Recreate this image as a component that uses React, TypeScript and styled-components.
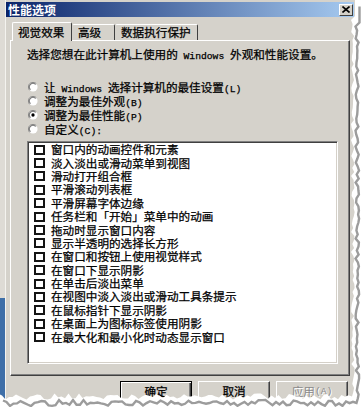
import React from "react";
import styled, { createGlobalStyle, css } from "styled-components";

const FONT = `"Noto Sans CJK SC", "Liberation Sans", sans-serif`;

const GlobalStyle = createGlobalStyle`
  html, body { margin: 0; padding: 0; background: #fff; }
  body { font-family: ${FONT}; color: #000; }
  #root { width: 361px; height: 407px; }
`;

const Frame = styled.div`
  position: relative;
  width: 361px;
  height: 407px;
  overflow: hidden;
  display: flex;
  background: #fff;
  -webkit-text-stroke: 0.25px currentColor;
`;

const Backdrop = styled.div`
  width: 5px;
  flex: none;
  background: linear-gradient(
    to bottom,
    #dedbd5 0,
    #dedbd5 298px,
    #3f6fa8 298px,
    #3f6fa8 100%
  );
`;

const Window = styled.div`
  width: 350px;
  flex: none;
  box-sizing: border-box;
  display: flex;
  flex-direction: column;
  background: #d5d2cb;
  border-left: 1px solid #f4f3ef;
  padding-top: 2px;
`;

const TitleBar = styled.div`
  height: 15px;
  margin-right: 1px;
  display: flex;
  align-items: center;
  justify-content: space-between;
  padding: 0 1px 0 2px;
  background: linear-gradient(to right, #0a246a, #a6caf0);
`;

const Title = styled.span`
  color: #fff;
  font: bold 12px/15px ${FONT};
  -webkit-text-stroke: 0;
`;

const CloseButton = styled.span`
  width: 14px;
  height: 12px;
  box-sizing: border-box;
  display: flex;
  align-items: center;
  justify-content: center;
  background: #d4d0c8;
  border: 1px solid;
  border-color: #fff #404040 #404040 #fff;
`;

const Body = styled.div`
  display: flex;
  flex-direction: column;
  padding: 5px 5px 0 4px;
`;

const TabStrip = styled.div`
  height: 18px;
  display: flex;
  align-items: flex-end;
  padding-left: 2px;
  position: relative;
  z-index: 1;
`;

const Tab = styled.div<{ $active?: boolean; $w: number }>`
  width: ${(p) => p.$w}px;
  box-sizing: border-box;
  display: flex;
  align-items: center;
  padding-left: 5px;
  font: 11.6px/13px ${FONT};
  background: #d5d2cb;
  border-top: 1px solid #fff;
  border-left: 1px solid #fff;
  border-right: 1px solid #404040;
  border-radius: 2px 2px 0 0;
  ${(p) =>
    p.$active
      ? css`
          height: 19px;
          margin-bottom: -1px;
        `
      : css`
          height: 16px;
          border-left-color: transparent;
        `}
`;

const Panel = styled.div`
  height: 336px;
  box-sizing: border-box;
  display: flex;
  flex-direction: column;
  border: 1px solid;
  border-color: #fff #404040 #404040 #fff;
  box-shadow: inset -1px -1px 0 #808080;
  padding: 7px 11px 11px 16px;
`;

const Intro = styled.p`
  margin: 0;
  height: 13px;
  font: 11.6px/13px ${FONT};
  white-space: nowrap;
`;

const Latin = styled.span`
  font-family: "Liberation Mono", monospace;
  font-size: 9.7px;
  white-space: pre;
`;

const RadioGroup = styled.div`
  margin-top: 19px;
  display: flex;
  flex-direction: column;
`;

const RadioRow = styled.div`
  height: 14px;
  display: flex;
  align-items: center;
  gap: 6px;
  padding-left: 1px;
`;

const Label = styled.span<{ $h: number }>`
  display: block;
  height: ${(p) => p.$h}px;
  font: 11.6px/${(p) => p.$h}px ${FONT};
  white-space: nowrap;
`;

const ListBox = styled.div`
  margin-top: 5px;
  height: 223px;
  box-sizing: border-box;
  background: #fff;
  border: 1px solid;
  border-color: #808080 #fff #fff #808080;
  box-shadow: inset 1px 1px 0 #404040, inset -1px -1px 0 #d4d0c8;
  padding: 1px 0 0 6px;
  display: flex;
  flex-direction: column;
`;

const ListItem = styled.div`
  height: 13.4px;
  display: flex;
  align-items: center;
  gap: 6px;
`;

const CheckBox = styled.span`
  width: 11px;
  height: 10px;
  box-sizing: border-box;
  flex: none;
  background: #fff;
  border: 2px solid #141414;
`;

const ButtonRow = styled.div`
  margin-top: 5px;
  display: flex;
  justify-content: flex-end;
  gap: 6px;
  padding-right: 2px;
`;

const Button = styled.div<{ $default?: boolean; $disabled?: boolean }>`
  width: 72px;
  height: 21px;
  box-sizing: border-box;
  display: flex;
  align-items: center;
  justify-content: center;
  font: 11.6px/13px ${FONT};
  background: #d5d2cb;
  border: 1px solid;
  border-color: #fff #404040 #404040 #fff;
  box-shadow: inset -1px -1px 0 #808080;
  ${(p) =>
    p.$default &&
    css`
      border-color: #000;
      box-shadow: inset 1px 1px 0 #fff, inset -1px -1px 0 #404040,
        inset -2px -2px 0 #808080;
    `}
  ${(p) =>
    p.$disabled &&
    css`
      color: #8a8a8a;
      -webkit-text-stroke: 0;
      text-shadow: 1px 1px 0 #fff;
    `}
`;

const TornLayer = styled.svg`
  position: absolute;
  left: 0;
  top: 0;
  pointer-events: none;
`;

function makeRng(seed: number) {
  let s = seed;
  return () => {
    s = (s * 16807) % 2147483647;
    return s / 2147483647;
  };
}

const TornEdge: React.FC = () => {
  const { outside, edge } = React.useMemo(() => {
    const r = makeRng(11);
    const pts: [number, number][] = [];
    for (let y = 0; y <= 392; y += 4) {
      const x = y < 18 ? 355 : 352.8 + (r() - 0.5) * 3.6;
      pts.push([x, y]);
    }
    for (let x = 352; x >= -4; x -= 3.5) {
      pts.push([x, 396.5 + (r() - 0.5) * 6]);
    }
    const line = pts
      .map(([x, y], i) => `${i ? "L" : "M"}${x.toFixed(1)},${y.toFixed(1)}`)
      .join(" ");
    const poly =
      `M-4,-4 L355,-4 ` +
      pts.map(([x, y]) => `L${x.toFixed(1)},${y.toFixed(1)}`).join(" ") +
      ` Z`;
    return { outside: `M-6,-6 H367 V413 H-6 Z ${poly}`, edge: line };
  }, []);

  return (
    <TornLayer width={361} height={407} viewBox="0 0 361 407">
      <defs>
        <clipPath id="outside-clip">
          <path d={outside} clipRule="evenodd" />
        </clipPath>
        <filter id="soft" x="-5%" y="-5%" width="110%" height="110%">
          <feGaussianBlur stdDeviation="0.7" />
        </filter>
      </defs>
      <path d={outside} fill="#fff" fillRule="evenodd" />
      <g clipPath="url(#outside-clip)">
        <path
          d={edge}
          transform="translate(4.5,6.5)"
          fill="none"
          stroke="#9c9c9c"
          strokeWidth={2.4}
          filter="url(#soft)"
        />
      </g>
    </TornLayer>
  );
};

const RadioIcon: React.FC<{ checked?: boolean }> = ({ checked }) => (
  <svg width="10" height="10" viewBox="0 0 12 12" style={{ flex: "none" }}>
    <circle cx="6" cy="6" r="5.5" fill="#fff" />
    <path d="M10 2 A5.5 5.5 0 0 0 2 10" fill="none" stroke="#808080" strokeWidth="1" />
    <path d="M9.2 2.8 A4.5 4.5 0 0 0 2.8 9.2" fill="none" stroke="#404040" strokeWidth="1" />
    {checked && <circle cx="6" cy="6" r="2" fill="#000" />}
  </svg>
);

const CloseIcon: React.FC = () => (
  <svg width="8" height="7" viewBox="0 0 8 7">
    <path d="M0.5 0.5 L7.5 6.5 M7.5 0.5 L0.5 6.5" stroke="#000" strokeWidth="1.6" />
  </svg>
);

const effects = [
  "窗口内的动画控件和元素",
  "淡入淡出或滑动菜单到视图",
  "滑动打开组合框",
  "平滑滚动列表框",
  "平滑屏幕字体边缘",
  "任务栏和「开始」菜单中的动画",
  "拖动时显示窗口内容",
  "显示半透明的选择长方形",
  "在窗口和按钮上使用视觉样式",
  "在窗口下显示阴影",
  "在单击后淡出菜单",
  "在视图中淡入淡出或滑动工具条提示",
  "在鼠标指针下显示阴影",
  "在桌面上为图标标签使用阴影",
  "在最大化和最小化时动态显示窗口",
];

const radios = [
  { cjk: ["让", "选择计算机的最佳设置"], latin: " Windows ", key: "(L)" },
  { cjk: ["调整为最佳外观"], key: "(B)" },
  { cjk: ["调整为最佳性能"], key: "(P)", checked: true },
  { cjk: ["自定义"], key: "(C):" },
];

export default function App() {
  return (
    <>
      <GlobalStyle />
      <Frame>
        <Backdrop />
        <Window>
          <TitleBar>
            <Title>性能选项</Title>
            <CloseButton>
              <CloseIcon />
            </CloseButton>
          </TitleBar>
          <Body>
            <TabStrip>
              <Tab $active $w={60}>视觉效果</Tab>
              <Tab $w={43}>高级</Tab>
              <Tab $w={83}>数据执行保护</Tab>
            </TabStrip>
            <Panel>
              <Intro>
                选择您想在此计算机上使用的<Latin> Windows </Latin>外观和性能设置。
              </Intro>
              <RadioGroup>
                {radios.map((r) => (
                  <RadioRow key={r.key}>
                    <RadioIcon checked={r.checked} />
                    <Label $h={14}>
                      {r.cjk[0]}
                      {r.latin && <Latin>{r.latin}</Latin>}
                      {r.cjk[1]}
                      <Latin>{r.key}</Latin>
                    </Label>
                  </RadioRow>
                ))}
              </RadioGroup>
              <ListBox>
                {effects.map((e) => (
                  <ListItem key={e}>
                    <CheckBox />
                    <Label $h={13}>{e}</Label>
                  </ListItem>
                ))}
              </ListBox>
            </Panel>
            <ButtonRow>
              <Button $default>确定</Button>
              <Button>取消</Button>
              <Button $disabled>
                应用<Latin>(A)</Latin>
              </Button>
            </ButtonRow>
          </Body>
        </Window>
        <TornEdge />
      </Frame>
    </>
  );
}
